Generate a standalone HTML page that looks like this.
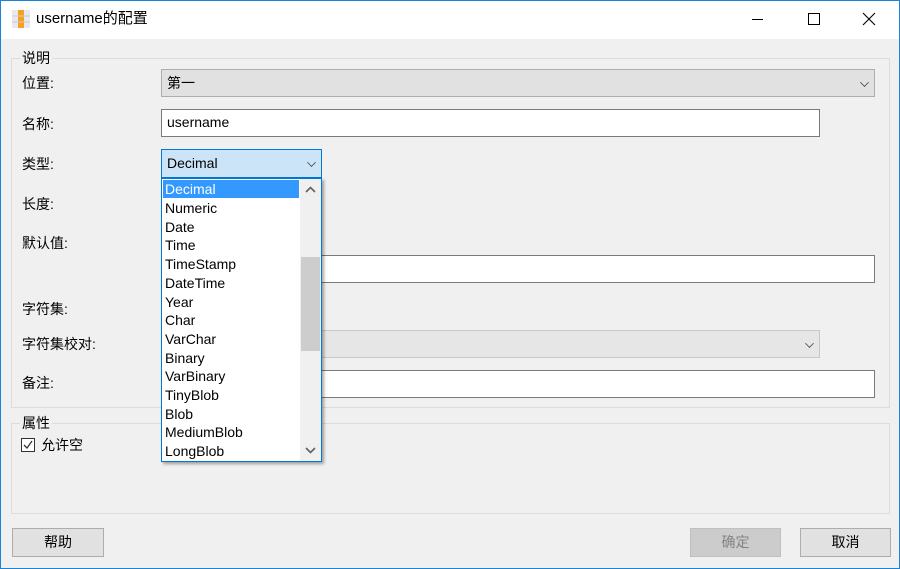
<!DOCTYPE html>
<html><head><meta charset="utf-8"><style>
*{box-sizing:border-box;margin:0;padding:0}
body{width:900px;height:569px;overflow:hidden;background:#f0f0f0;font-family:"Liberation Sans","Noto Sans CJK SC",sans-serif;font-size:14px;color:#000;position:relative}
.win{position:absolute;left:0;top:0;width:900px;height:569px;border:1px solid #1883d7;}
.a{position:absolute}
.title{left:1px;top:1px;width:898px;height:38px;background:#fff}
.grp{border:1px solid #dcdcdc}
.lbl{font-size:14px;line-height:16px}
.cmb{background:#e1e1e1;border:1px solid #adadad;padding-left:5px;line-height:26px}
.inp{background:#fff;border:1px solid #7a7a7a;padding-left:5px;line-height:25px}
.chev{position:absolute;right:6px;top:9px;width:7px;height:7px;border-right:1.3px solid #555;border-bottom:1.3px solid #555;transform:rotate(45deg) scale(.9);}
.btn{background:#e1e1e1;border:1px solid #adadad;text-align:center;line-height:26px}
.list{left:161px;top:178px;width:161px;height:284px;background:#fff;border:1px solid #0078d7;box-shadow:2px 2px 3px rgba(0,0,0,.35)}
.it{position:absolute;left:3px;font-size:14px;line-height:18px}
</style></head><body>
<div class="win"></div>
<div class="a title"></div>
<svg class="a" style="left:12px;top:10px" width="18" height="18"><rect x="0" y="0" width="18" height="18" fill="#e8e8ee"/><rect x="6" y="0" width="6" height="18" fill="#f6a020"/><line x1="0" y1="6" x2="18" y2="6" stroke="#ccc"/><line x1="0" y1="12" x2="18" y2="12" stroke="#ccc"/></svg>
<div class="a" style="left:36px;top:10px;font-size:15px;line-height:18px">username的配置</div>
<div class="a" style="left:752px;top:19px;width:11px;height:1px;background:#000"></div>
<div class="a" style="left:808px;top:13px;width:12px;height:12px;border:1px solid #000"></div>
<svg class="a" style="left:862px;top:12px" width="14" height="14"><path d="M1 1L13 13M13 1L1 13" stroke="#000" stroke-width="1.1"/></svg>

<div class="a grp" style="left:11px;top:58px;width:879px;height:350px"></div>
<div class="a lbl" style="left:20px;top:50px;background:#f0f0f0;padding:0 2px">说明</div>
<div class="a lbl" style="left:22px;top:75px">位置:</div>
<div class="a lbl" style="left:22px;top:116px">名称:</div>
<div class="a lbl" style="left:22px;top:156px">类型:</div>
<div class="a lbl" style="left:22px;top:196px">长度:</div>
<div class="a lbl" style="left:22px;top:235px">默认值:</div>
<div class="a lbl" style="left:22px;top:301px">字符集:</div>
<div class="a lbl" style="left:22px;top:336px">字符集校对:</div>
<div class="a lbl" style="left:22px;top:375px">备注:</div>

<div class="a cmb" style="left:161px;top:69px;width:714px;height:28px">第一<span class="chev"></span></div>
<div class="a inp" style="left:161px;top:109px;width:659px;height:28px">username</div>
<div class="a cmb" style="left:161px;top:149px;width:161px;height:29px;background:#cce4f7;border-color:#0078d7">Decimal<span class="chev"></span></div>
<div class="a inp" style="left:300px;top:255px;width:575px;height:28px"></div>
<div class="a cmb" style="left:300px;top:330px;width:520px;height:28px;background:#e6e6e6;border-color:#c8c8c8"><span class="chev"></span></div>
<div class="a inp" style="left:300px;top:370px;width:575px;height:28px"></div>

<div class="a grp" style="left:11px;top:423px;width:879px;height:91px"></div>
<div class="a lbl" style="left:20px;top:415px;background:#f0f0f0;padding:0 2px">属性</div>
<div class="a" style="left:21px;top:438px;width:14px;height:14px;border:1px solid #333;background:#fff"></div>
<svg class="a" style="left:22px;top:439px" width="12" height="12"><path d="M2 6L5 9L10 2" stroke="#333" stroke-width="1.3" fill="none"/></svg>
<div class="a lbl" style="left:41px;top:437px">允许空</div>

<div class="a btn" style="left:12px;top:528px;width:92px;height:29px">帮助</div>
<div class="a btn" style="left:690px;top:528px;width:91px;height:29px;background:#ccc;border-color:#bfbfbf;color:#838383">确定</div>
<div class="a btn" style="left:800px;top:528px;width:91px;height:29px">取消</div>

<div class="a list">
<div class="a" style="left:1px;top:1px;width:136px;height:18px;background:#3399ff"></div>
<div class="it" style="top:1px;color:#fff">Decimal</div>
<div class="it" style="top:20px">Numeric</div>
<div class="it" style="top:38.7px">Date</div>
<div class="it" style="top:57.4px">Time</div>
<div class="it" style="top:76.1px">TimeStamp</div>
<div class="it" style="top:94.8px">DateTime</div>
<div class="it" style="top:113.5px">Year</div>
<div class="it" style="top:132.2px">Char</div>
<div class="it" style="top:150.9px">VarChar</div>
<div class="it" style="top:169.6px">Binary</div>
<div class="it" style="top:188.3px">VarBinary</div>
<div class="it" style="top:207px">TinyBlob</div>
<div class="it" style="top:225.7px">Blob</div>
<div class="it" style="top:244.4px">MediumBlob</div>
<div class="it" style="top:263.1px">LongBlob</div>
<div class="a" style="left:138px;top:0;width:21px;height:282px;background:#f0f0f0"></div>
<div class="a" style="left:139px;top:78px;width:19px;height:94px;background:#cdcdcd"></div>
<svg class="a" style="left:143px;top:7px" width="11" height="7"><path d="M1 6L5.5 1.5L10 6" stroke="#606060" stroke-width="1.6" fill="none"/></svg>
<svg class="a" style="left:143px;top:268px" width="11" height="7"><path d="M1 1L5.5 5.5L10 1" stroke="#606060" stroke-width="1.6" fill="none"/></svg>
</div>
</body></html>
